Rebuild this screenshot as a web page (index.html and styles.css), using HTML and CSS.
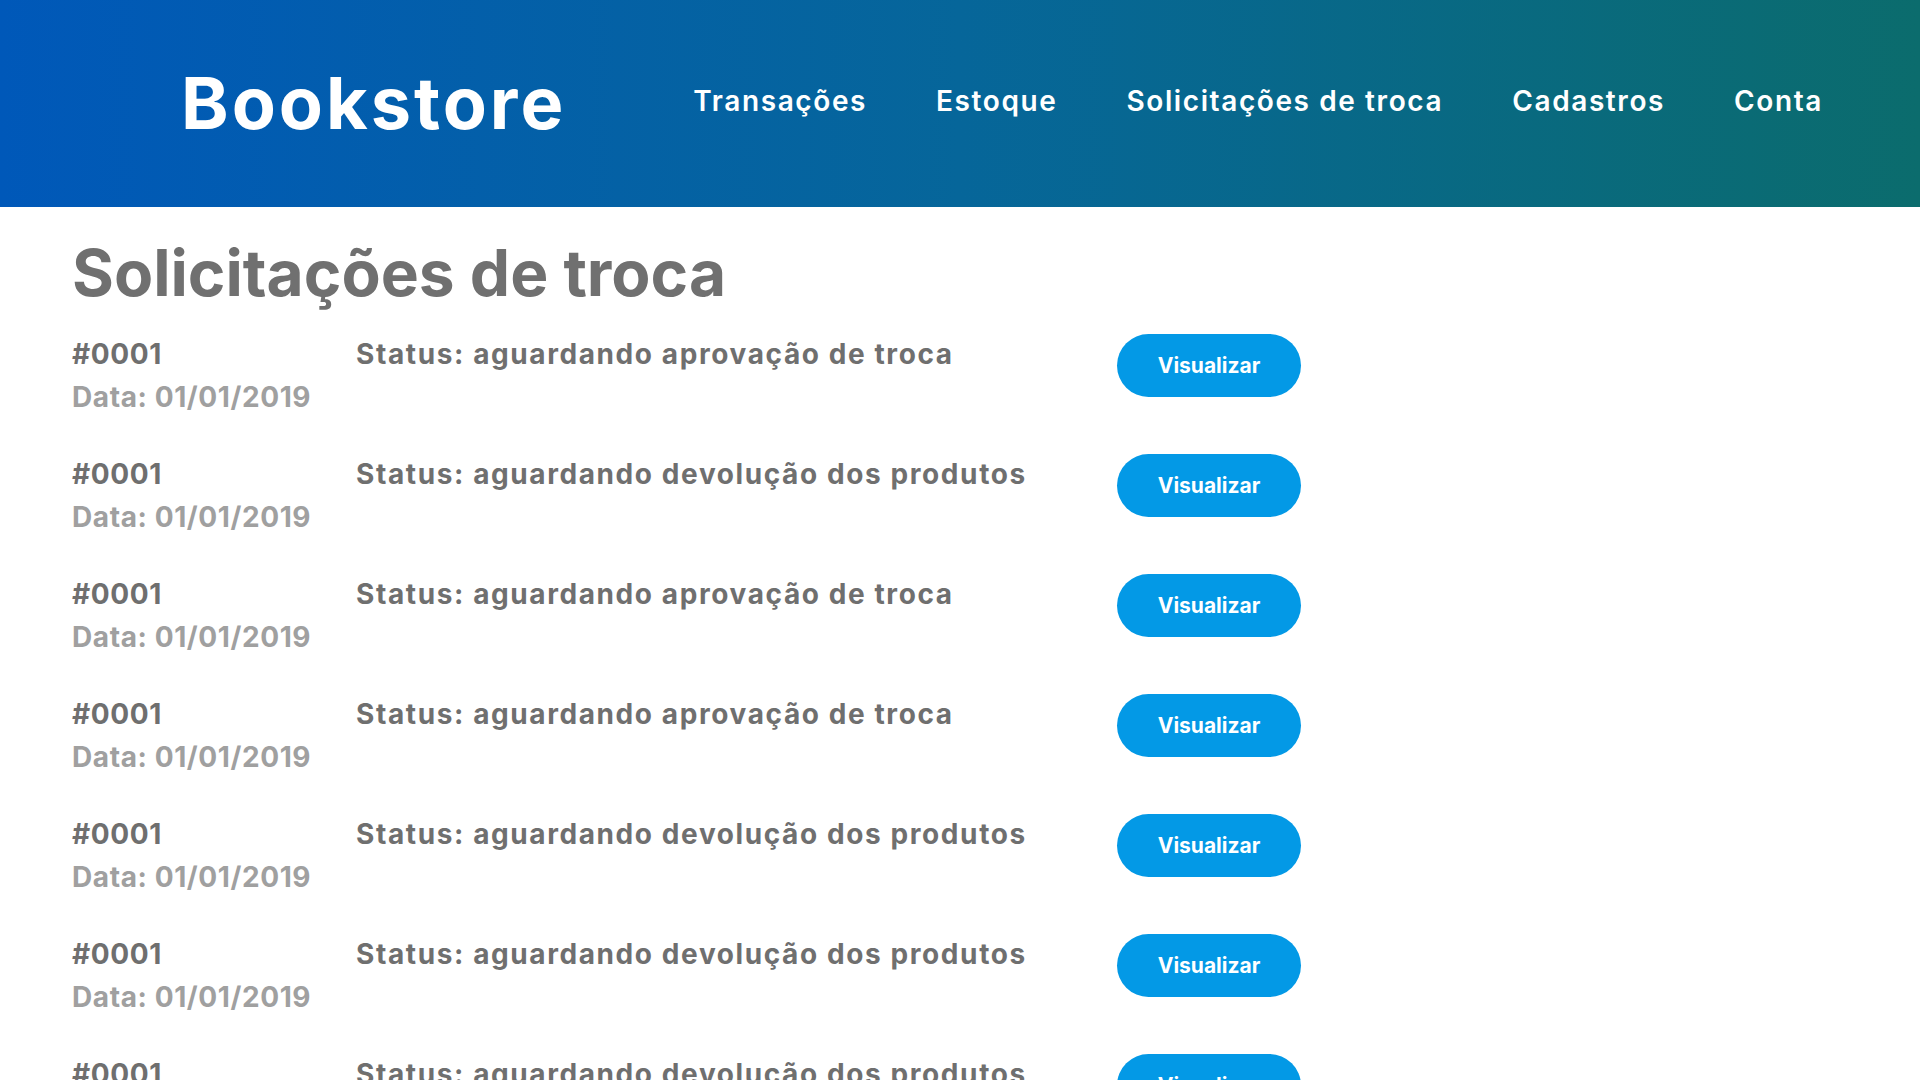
FILE: index.html
```html
<!DOCTYPE html>
<html lang="pt-BR">
<head>
<meta charset="utf-8">
<title>Bookstore - Solicitações de troca</title>
<link rel="stylesheet" href="styles.css">
</head>
<body>
<header class="topbar">
  <div class="logo">Bookstore</div>
  <nav class="nav">
    <a href="#">Transações</a>
    <a href="#">Estoque</a>
    <a href="#">Solicitações de troca</a>
    <a href="#">Cadastros</a>
    <a href="#">Conta</a>
  </nav>
</header>
<main class="content">
  <h1 class="title">Solicitações de troca</h1>
  <ul class="list">
    <li class="row"><div class="info"><div class="id">#0001</div><div class="date">Data: 01/01/2019</div></div><div class="status">Status: aguardando aprovação de troca</div><button class="btn">Visualizar</button></li>
    <li class="row"><div class="info"><div class="id">#0001</div><div class="date">Data: 01/01/2019</div></div><div class="status">Status: aguardando devolução dos produtos</div><button class="btn">Visualizar</button></li>
    <li class="row"><div class="info"><div class="id">#0001</div><div class="date">Data: 01/01/2019</div></div><div class="status">Status: aguardando aprovação de troca</div><button class="btn">Visualizar</button></li>
    <li class="row"><div class="info"><div class="id">#0001</div><div class="date">Data: 01/01/2019</div></div><div class="status">Status: aguardando aprovação de troca</div><button class="btn">Visualizar</button></li>
    <li class="row"><div class="info"><div class="id">#0001</div><div class="date">Data: 01/01/2019</div></div><div class="status">Status: aguardando devolução dos produtos</div><button class="btn">Visualizar</button></li>
    <li class="row"><div class="info"><div class="id">#0001</div><div class="date">Data: 01/01/2019</div></div><div class="status">Status: aguardando devolução dos produtos</div><button class="btn">Visualizar</button></li>
    <li class="row"><div class="info"><div class="id">#0001</div><div class="date">Data: 01/01/2019</div></div><div class="status">Status: aguardando devolução dos produtos</div><button class="btn">Visualizar</button></li>
  </ul>
</main>
</body>
</html>
```
FILE: styles.css
```css
* { box-sizing: border-box; }
html, body { margin: 0; padding: 0; }
body {
  font-family: Inter, "Open Sans", sans-serif;
  background: #ffffff;
  overflow: hidden;
  height: 1080px;
}
.topbar {
  height: 207px;
  display: flex;
  align-items: center;
  padding: 0 97px 0 181px;
  background: linear-gradient(90deg, #0058b9 0%, #06669a 50%, #0b6c6d 100%);
}
.logo {
  color: #ffffff;
  font-weight: 700;
  font-size: 72px;
  letter-spacing: 3px;
  line-height: 1;
  margin-bottom: 2px;
}
.nav {
  margin-left: auto;
  display: flex;
  gap: 69px;
  margin-bottom: 5px;
}
.nav a {
  color: #ffffff;
  text-decoration: none;
  font-weight: 600;
  font-size: 28px;
  letter-spacing: 1.6px;
}
.content {
  padding: 0 0 0 72px;
}
.title {
  margin: 0;
  padding-top: 26px;
  font-size: 64px;
  font-weight: 700;
  color: #707070;
  line-height: 80px;
}
.list {
  list-style: none;
  margin: 0;
  padding: 2px 0 0;
}
.row {
  display: grid;
  grid-template-columns: 284px 761px 184px;
  height: 120px;
  padding-top: 18px;
}
.id, .date, .status {
  font-size: 28px;
  font-weight: 700;
  line-height: 43px;
}
.id { color: #6f6f6f; letter-spacing: 0.6px; }
.date { color: #a0a0a0; letter-spacing: 0.6px; }
.status { color: #6f6f6f; letter-spacing: 1.6px; }
.btn {
  width: 184px;
  height: 63px;
  border: 0;
  border-radius: 32px;
  background: #0399e6;
  color: #ffffff;
  font-family: inherit;
  font-size: 21px;
  font-weight: 700;
  margin-top: 1px;
  align-self: start;
}
```
